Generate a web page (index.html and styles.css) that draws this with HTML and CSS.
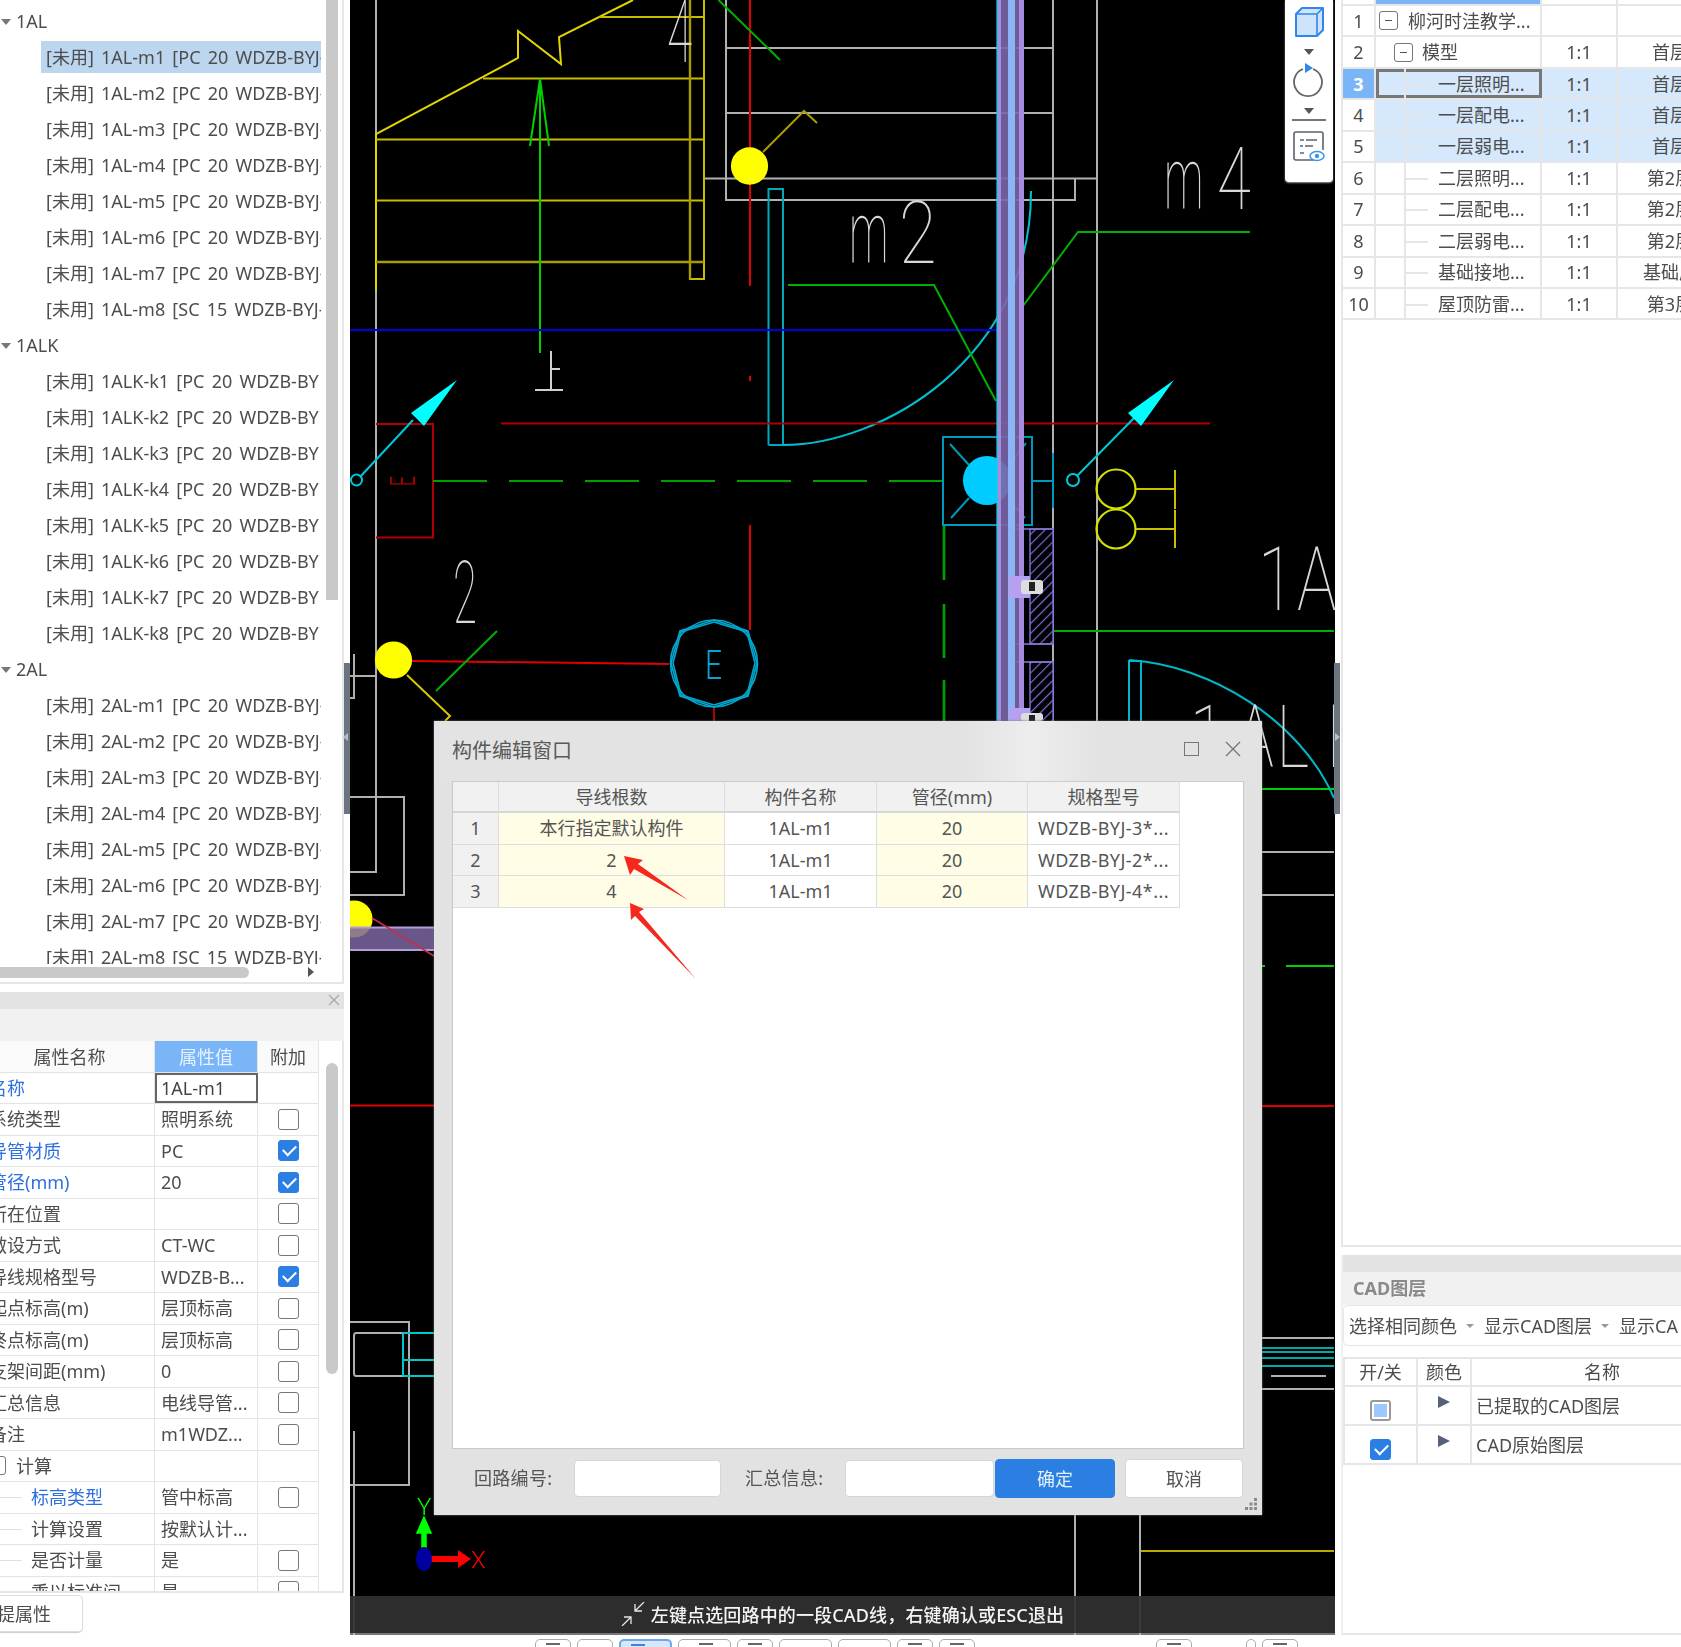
FILE: index.html
```html
<!DOCTYPE html>
<html lang="zh">
<head>
<meta charset="utf-8">
<title>构件编辑窗口</title>
<link rel="stylesheet" href="styles.css">
</head>
<body>
<div class="app">
  <aside class="left">
    <section class="tree-panel">
      <div class="tree">
        <div class="group">1AL</div>
        <div class="item selected">[未用] 1AL-m1 [PC 20 WDZB-BYJ-</div>
        <div class="item">[未用] 1AL-m2 [PC 20 WDZB-BYJ-</div>
        <div class="item">[未用] 1AL-m3 [PC 20 WDZB-BYJ-</div>
        <div class="item">[未用] 1AL-m4 [PC 20 WDZB-BYJ-</div>
        <div class="item">[未用] 1AL-m5 [PC 20 WDZB-BYJ-</div>
        <div class="item">[未用] 1AL-m6 [PC 20 WDZB-BYJ-</div>
        <div class="item">[未用] 1AL-m7 [PC 20 WDZB-BYJ-</div>
        <div class="item">[未用] 1AL-m8 [SC 15 WDZB-BYJ-</div>
        <div class="group">1ALK</div>
        <div class="item">[未用] 1ALK-k1 [PC 20 WDZB-BY</div>
        <div class="item">[未用] 1ALK-k2 [PC 20 WDZB-BY</div>
        <div class="item">[未用] 1ALK-k3 [PC 20 WDZB-BY</div>
        <div class="item">[未用] 1ALK-k4 [PC 20 WDZB-BY</div>
        <div class="item">[未用] 1ALK-k5 [PC 20 WDZB-BY</div>
        <div class="item">[未用] 1ALK-k6 [PC 20 WDZB-BY</div>
        <div class="item">[未用] 1ALK-k7 [PC 20 WDZB-BY</div>
        <div class="item">[未用] 1ALK-k8 [PC 20 WDZB-BY</div>
        <div class="group">2AL</div>
        <div class="item">[未用] 2AL-m1 [PC 20 WDZB-BYJ-</div>
        <div class="item">[未用] 2AL-m2 [PC 20 WDZB-BYJ-</div>
        <div class="item">[未用] 2AL-m3 [PC 20 WDZB-BYJ-</div>
        <div class="item">[未用] 2AL-m4 [PC 20 WDZB-BYJ-</div>
        <div class="item">[未用] 2AL-m5 [PC 20 WDZB-BYJ-</div>
        <div class="item">[未用] 2AL-m6 [PC 20 WDZB-BYJ-</div>
        <div class="item">[未用] 2AL-m7 [PC 20 WDZB-BYJ-</div>
        <div class="item">[未用] 2AL-m8 [SC 15 WDZB-BYJ-</div>
      </div>
      <div class="vbar tree-vbar"></div>
      <div class="hbar"><div class="hthumb"></div><span class="harrow"></span></div>
    </section>

    <section class="prop-panel">
      <div class="panel-head"><svg class="x-small" viewBox="0 0 12 12"><path d="M1 1L11 11M11 1L1 11"/></svg></div>
      <div class="panel-band"></div>
      <div class="prop-body">
        <div class="prop-table">
          <div class="prow phead"><div>属性名称</div><div class="hl">属性值</div><div>附加</div></div>
          <div class="prow"><div class="blue">名称</div><div class="edit">1AL-m1</div><div></div></div>
          <div class="prow"><div>系统类型</div><div>照明系统</div><div><i class="cb"></i></div></div>
          <div class="prow"><div class="blue">导管材质</div><div>PC</div><div><i class="cb on"></i></div></div>
          <div class="prow"><div class="blue">管径(mm)</div><div>20</div><div><i class="cb on"></i></div></div>
          <div class="prow"><div>所在位置</div><div></div><div><i class="cb"></i></div></div>
          <div class="prow"><div>敷设方式</div><div>CT-WC</div><div><i class="cb"></i></div></div>
          <div class="prow"><div>导线规格型号</div><div>WDZB-B...</div><div><i class="cb on"></i></div></div>
          <div class="prow"><div>起点标高(m)</div><div>层顶标高</div><div><i class="cb"></i></div></div>
          <div class="prow"><div>终点标高(m)</div><div>层顶标高</div><div><i class="cb"></i></div></div>
          <div class="prow"><div>支架间距(mm)</div><div>0</div><div><i class="cb"></i></div></div>
          <div class="prow"><div>汇总信息</div><div>电线导管...</div><div><i class="cb"></i></div></div>
          <div class="prow"><div>备注</div><div>m1WDZ...</div><div><i class="cb"></i></div></div>
          <div class="prow"><div class="sect"><i class="minus"></i>计算</div><div></div><div></div></div>
          <div class="prow"><div class="sub blue">标高类型</div><div>管中标高</div><div><i class="cb"></i></div></div>
          <div class="prow"><div class="sub">计算设置</div><div>按默认计...</div><div></div></div>
          <div class="prow"><div class="sub">是否计量</div><div>是</div><div><i class="cb"></i></div></div>
          <div class="prow"><div class="sub">乘以标准间</div><div>是</div><div><i class="cb"></i></div></div>
        </div>
        <div class="vbar prop-vbar"></div>
      </div>
      <div class="prop-foot"><div class="extract">提属性</div></div>
    </section>
  </aside>

  <main class="center">
    <div class="canvas">
      <svg class="cad" viewBox="350 0 985 1635" width="985" height="1635">
        <defs>
          <pattern id="hatch" width="7" height="7" patternUnits="userSpaceOnUse" patternTransform="rotate(45)">
            <rect width="7" height="7" fill="#000"/>
            <line x1="0" y1="0" x2="0" y2="7" stroke="#7a6ad8" stroke-width="2.4"/>
          </pattern>
        </defs>
        <g fill="none" stroke-width="2">
          <g stroke="#b0b0b0">
            <path d="M376 0V872H350"/>
            <path d="M726 0V200H1075V178M726 48H1053M726 113H1053M704 178.5H1097"/>
            <path d="M1053 0V721M1097 0V721"/>
            <path d="M354 654V698H350M350 676H376"/>
            <path d="M350 797H404V895H350"/>
            <path d="M350 1322H409V1485H350"/>
            <path d="M403 1333H356Q354 1333 354 1336V1373Q354 1376 356 1376H403"/>
            <path d="M354 1431V1635"/>
            <path d="M1075 1515V1635M1140 1515V1635"/>
            <path d="M1262 852H1334M1262 895H1334M1262 1338H1334M1271 1376H1326M1262 1389H1334"/>
          </g>
          <path stroke="#e2d500" d="M376 291V134L518 58 518 31 561 64 559 37 633 0"/>
          <path stroke="#c8bc00" d="M599 17H704M483 78.500H704M376 139.500H704M376 200.500H704M704 0V279H690V0"/>
          <path stroke="#a89c00" d="M376 262H704M690 0V279" stroke-width="2.400"/>
          <path stroke="#00d000" d="M540 79V353M530 146L540 79 549 146"/>
          <path stroke="#e00000" d="M750 0V286M750 376V381M750 525V630M412 661L669 664"/>
          <path stroke="#00b000" d="M718.500 0L780 60M436 691L497 631"/>
          <path stroke="#a89c00" d="M763 152L804 111 817 123"/>
          <path stroke="#d8c800" d="M407 675L450 716 445 721"/>
          <path stroke="#00a8b8" d="M768.500 445V189H783V445H768.500"/>
          <path stroke="#00c0d0" d="M783 445C880 445 1031 360 1031 191"/>
          <path stroke="#0000e0" d="M350 330H997"/>
          <path stroke="#b00000" d="M501 423.500H1210M376 424H433V537.500H376M714 707V721"/>
          <path stroke="#00a000" d="M433 481H943" stroke-dasharray="54 22"/>
          <path stroke="#00a000" stroke-width="2.600" d="M944 525V580M944 604V658M944 680V721"/>
          <path stroke="#00b000" d="M788 285H934L996 401M1250 232H1078L1020 310M1042 631H1334"/>
          <path stroke="#00d000" d="M1262 789H1334M1262 966H1265M1286 966H1334"/>
          <path stroke="#e00000" d="M350 1105.500H434M1262 1106H1334"/>
          <path stroke="#00c8c8" d="M403 1333V1376M403 1333H434M403 1360H434M403 1376H434"/>
          <path stroke="#00a8a8" d="M1262 1348H1334M1262 1352H1334M1262 1358H1334M1262 1366H1334"/>
          <path stroke="#b8ac00" d="M1141 1551H1334"/>
          <path stroke="#00b8c8" d="M1129 721V661H1141V721M1129 660C1210 665 1300 720 1334 798"/>
          <circle cx="356.500" cy="480" r="5.500" stroke="#00c8d8"/>
          <path stroke="#00c8d8" d="M360 477L413 420"/>
          <circle cx="1073" cy="480" r="6" stroke="#00c8d8"/>
          <path stroke="#00c8d8" d="M1077 476L1137 415"/>
          <path stroke="#d0d0d0" d="M551 351V390M535 390H563M551 369H560"/>
        </g>
        <polygon fill="#00ffff" points="457,380 411,413 424,426"/>
        <polygon fill="#00ffff" points="1174,380 1128,413 1141,426"/>
        <ellipse cx="749.500" cy="166" rx="18.600" ry="18.800" fill="#ffff00"/>
        <ellipse cx="393.500" cy="660" rx="18.600" ry="18.600" fill="#ffff00"/>
        <ellipse cx="354" cy="919" rx="18.600" ry="18.600" fill="#ffff00"/>
        <rect x="350" y="927" width="84" height="23" fill="#7a66a0" fill-opacity=".85"/>
        <path d="M350 927.500H434M350 950H434" stroke="#b39ddb" stroke-width="2"/>
        <path d="M372 918L434 956" stroke="#c03050" stroke-width="1.600"/>
        <g fill="none" stroke="#00a8d0" stroke-width="1.600">
          <circle cx="714" cy="663.500" r="43.500"/>
          <polygon points="714,620 748,631 757,663 748,696 714,707 680,696 671,663 680,631"/>
          <polygon points="714,622 747,632 755,663 747,695 714,705 681,695 673,663 681,632"/>
        </g>
        <rect x="943" y="437" width="89" height="88" fill="none" stroke="#0099bb" stroke-width="2"/>
        <path d="M950 444L969 465M951 518L969 498M1026 443L1009 465M1025 518L1009 500M1032 481H1053M1053 453V508" fill="none" stroke="#0099bb" stroke-width="2"/>
        <ellipse cx="987" cy="480.500" rx="24" ry="24.500" fill="#00ccff"/>
        <rect x="1030" y="529" width="23" height="115" fill="url(#hatch)" stroke="#7a6ad8" stroke-width="1.500"/>
        <rect x="1030" y="662" width="23" height="60" fill="url(#hatch)" stroke="#7a6ad8" stroke-width="1.500"/>
        <path d="M1012 529H1053M1012 644H1053M1012 662H1053" stroke="#8a78d0" stroke-width="1.500"/>
        <rect x="997" y="0" width="27" height="721" fill="#7a66a8" fill-opacity=".9"/>
        <rect x="997" y="0" width="4" height="721" fill="#a48de0"/>
        <rect x="1019" y="0" width="5" height="721" fill="#a48de0"/>
        <rect x="1008" y="0" width="7" height="721" fill="#8db4f5"/>
        <path d="M997 0V721" stroke="#00d8e0" stroke-width="1.200"/>
        <rect x="1009" y="576" width="21" height="22" fill="#b8a0f0"/>
        <rect x="1021" y="580" width="22" height="14" rx="3" fill="#ddd"/>
        <rect x="1029" y="582" width="6" height="9" fill="#222"/>
        <rect x="1009" y="708" width="21" height="13" fill="#b8a0f0"/>
        <rect x="1021" y="713" width="22" height="8" rx="3" fill="#ddd"/>
        <rect x="1029" y="715" width="6" height="6" fill="#222"/>
        <g fill="none" stroke="#d4e000" stroke-width="2.200">
          <circle cx="1116" cy="489" r="19.500"/>
          <circle cx="1116" cy="529" r="19.500"/>
        </g>
        <path d="M1136 489H1175M1136 529H1175M1175 470V509M1175 510V548" stroke="#c8c000" stroke-width="2" fill="none"/>
        <g class="cad-text">
          <text x="667" y="62" textLength="25" lengthAdjust="spacingAndGlyphs">4</text>
          <text transform="translate(849 263) scale(.5 1)">m</text>
          <text transform="translate(899 263) scale(.78 1)">2</text>
          <text transform="translate(1164 209) scale(.5 1)">m</text>
          <text transform="translate(1217 209) scale(.7 1)">4</text>
          <text x="453" y="623" textLength="24" lengthAdjust="spacingAndGlyphs">2</text>
          <text transform="translate(1258 610) scale(.75 1)" x="0 52">1A</text>
          <text transform="translate(1190 767) scale(.72 1)" x="0 64 120 190">1ALH</text>
        </g>
        <text class="cad-e" x="705" y="679" textLength="17" lengthAdjust="spacingAndGlyphs">E</text>
        <text class="cad-re" transform="translate(415 486) rotate(-90) scale(.5 1)">E</text>
        <path d="M424 1517L417 1533H422V1552H426V1533H431Z" fill="#00ff00" stroke="#00ff00" stroke-width="1.500"/>
        <path d="M430 1556H458V1550L471 1559 458 1568V1562H430Z" fill="#ff0000"/>
        <ellipse cx="424" cy="1559" rx="8" ry="12" fill="#0000a0"/>
        <text class="axis-y" x="417" y="1515">Y</text>
        <text class="axis-x" x="471" y="1568">X</text>
      </svg>

      <div class="sidetool">
        <svg class="st-cube" viewBox="0 0 32 32"><path d="M3 8L9 2H30V24L24 30H3Z" fill="#cfe3fb" stroke="#2e86ee" stroke-width="2" stroke-linejoin="round"/><path d="M3 8H24V30M24 8L30 2" fill="none" stroke="#2e86ee" stroke-width="1.600"/></svg>
        <span class="caret"></span>
        <svg class="st-rot" viewBox="0 0 32 34"><path d="M11 6A14 14 0 1 0 21 6" fill="none" stroke="#666" stroke-width="1.800"/><path d="M13 0L21 5 13 10Z" fill="#2e86ee"/></svg>
        <span class="caret"></span>
        <div class="st-line"></div>
        <svg class="st-list" viewBox="0 0 32 31"><path d="M23 29H3Q1 29 1 27V3Q1 1 3 1H28Q30 1 30 3V19" fill="none" stroke="#5a6370" stroke-width="1.600"/><path d="M7 9H11M13 9H24M7 15H10M12 15H20M7 22H11" stroke="#5a6370" stroke-width="1.600"/><ellipse cx="24" cy="25" rx="7" ry="4.500" fill="#fff" stroke="#3a96e8" stroke-width="1.500"/><circle cx="24" cy="25" r="2.200" fill="#3a96e8"/></svg>
      </div>

      <div class="status">
        <svg class="st-ic" viewBox="0 0 24 24"><path d="M23 0L14 9M14 2V9H21M1 24L10 15M3 15H10V22" fill="none" stroke="#e8e8e8" stroke-width="1.300"/></svg>
        <span>左键点选回路中的一段CAD线，右键确认或ESC退出</span>
      </div>

      <div class="dialog">
        <div class="dlg-title">
          <span class="dlg-name">构件编辑窗口</span>
          <span class="dlg-max"></span>
          <svg class="dlg-close" viewBox="0 0 16 16"><path d="M1 1L15 15M15 1L1 15"/></svg>
        </div>
        <div class="dlg-area">
          <div class="grid">
            <div class="grow ghead"><div class="rh"></div><div>导线根数</div><div>构件名称</div><div>管径(mm)</div><div>规格型号</div></div>
            <div class="grow"><div class="rh">1</div><div class="yel">本行指定默认构件</div><div>1AL-m1</div><div class="yel">20</div><div class="spec">WDZB-BYJ-3*...</div></div>
            <div class="grow"><div class="rh">2</div><div class="yel">2</div><div>1AL-m1</div><div class="yel">20</div><div class="spec">WDZB-BYJ-2*...</div></div>
            <div class="grow"><div class="rh">3</div><div class="yel">4</div><div>1AL-m1</div><div class="yel">20</div><div class="spec">WDZB-BYJ-4*...</div></div>
          </div>
          <svg class="annot a1" viewBox="0 0 64 44"><polygon points="0,0 19,4 14,8 64,44 10,13 6,19" fill="#f5281e"/></svg>
          <svg class="annot a2" viewBox="0 0 66 76"><polygon points="0,0 14,6 9,9 66,76 5,13 1,17" fill="#f5281e"/></svg>
        </div>
        <div class="dlg-foot">
          <label class="lbl">回路编号:</label><span class="inp i1"></span>
          <label class="lbl l2">汇总信息:</label><span class="inp i2"></span>
          <button class="btn ok">确定</button>
          <button class="btn cancel">取消</button>
        </div>
        <svg class="grip" viewBox="0 0 12 12"><path d="M9 0h3v3H9zM9 4.500h3v3H9zM4.500 4.500h3v3h-3zM9 9h3v3H9zM4.500 9h3v3h-3zM0 9h3v3H0z" fill="#8a8a8a"/></svg>
      </div>
    </div>
    <div class="bottombar">
      <span class="tb w37"><b class="mk"></b></span>
      <span class="tb w37"></span>
      <span class="tb w53 active"><b class="mk blue-mk"></b></span>
      <span class="tb w53"><b class="mk tri"></b></span>
      <span class="tb w37"><b class="mk"></b></span>
      <span class="tb w53"></span>
      <span class="tb w53"></span>
      <span class="tb w37"><b class="mk"></b></span>
      <span class="tb w37"><b class="mk"></b></span>
      <span class="tb w37 far"><b class="mk"></b></span>
      <span class="tb w11"></span>
      <span class="tb w37"><b class="mk"></b></span>
    </div>
  </main>

  <aside class="right">
    <section class="model-panel">
      <div class="mrow mtop"><div></div><div class="bluebar"></div><div></div><div></div></div>
      <div class="mrow"><div class="no">1</div><div class="name"><i class="minus m1"></i>柳河时洼教学...</div><div></div><div></div></div>
      <div class="mrow"><div class="no">2</div><div class="name"><i class="minus m2"></i><span class="t2">模型</span></div><div>1:1</div><div>首层</div></div>
      <div class="mrow sel cur"><div class="no">3</div><div class="name tick">一层照明...</div><div>1:1</div><div>首层</div></div>
      <div class="mrow sel"><div class="no">4</div><div class="name tick">一层配电...</div><div>1:1</div><div>首层</div></div>
      <div class="mrow sel"><div class="no">5</div><div class="name tick">一层弱电...</div><div>1:1</div><div>首层</div></div>
      <div class="mrow"><div class="no">6</div><div class="name tick">二层照明...</div><div>1:1</div><div>第2层</div></div>
      <div class="mrow"><div class="no">7</div><div class="name tick">二层配电...</div><div>1:1</div><div>第2层</div></div>
      <div class="mrow"><div class="no">8</div><div class="name tick">二层弱电...</div><div>1:1</div><div>第2层</div></div>
      <div class="mrow"><div class="no">9</div><div class="name tick">基础接地...</div><div>1:1</div><div>基础层</div></div>
      <div class="mrow"><div class="no">10</div><div class="name tick">屋顶防雷...</div><div>1:1</div><div>第3层</div></div>
    </section>
    <section class="cad-panel">
      <div class="panel-head"></div>
      <div class="cad-title">CAD图层</div>
      <div class="cad-tools"><span>选择相同颜色</span><i class="dd"></i><span>显示CAD图层</span><i class="dd"></i><span>显示CA</span></div>
      <div class="lrow lhead"><div>开/关</div><div>颜色</div><div class="lname-h">名称</div></div>
      <div class="lrow"><div><i class="cb partial"></i></div><div><i class="play"></i></div><div class="lname">已提取的CAD图层</div></div>
      <div class="lrow"><div><i class="cb on"></i></div><div><i class="play"></i></div><div class="lname">CAD原始图层</div></div>
    </section>
  </aside>

  <div class="handle hl-left"></div>
  <div class="handle hl-right"></div>
</div>
</body>
</html>
```

FILE: styles.css
```css
* { box-sizing: border-box; }
html, body { margin: 0; padding: 0; background: #fff; }
body {
  width: 1681px; height: 1647px; overflow: hidden;
  font-family: "Noto Sans", "Noto Sans CJK SC", sans-serif;
  font-size: 18px; color: #4d4d4d; line-height: 1;
}
.app {
  position: relative; display: grid;
  grid-template-columns: 350px 985px 346px;
  width: 1681px; height: 1647px; overflow: hidden;
  filter: blur(.45px);
}

/* left column */
.left { display: flex; flex-direction: column; gap: 8px; padding-right: 6px; }
.tree-panel {
  position: relative; height: 984px; flex: none;
  border-right: 2px solid #e6e6e6; border-bottom: 2px solid #e6e6e6;
  display: flex; flex-direction: column;
}
.tree { height: 964px; width: 321px; overflow: hidden; padding-top: 4px; flex: none; }
.group, .item { height: 36px; line-height: 35px; white-space: nowrap; overflow: hidden; }
.group { padding-left: 16px; position: relative; }
.group::before {
  content: ""; position: absolute; left: 1px; top: 15px;
  border: 5px solid transparent; border-top: 6px solid #777; border-bottom: 0;
}
.item { padding-left: 46px; word-spacing: 2.5px; }
.item.selected {
  position: relative; background: linear-gradient(#bcd6f0, #bcd6f0) 41px 1px / 280px 32px no-repeat;
}
.vbar { position: absolute; width: 12px; background: #c9c9c9; }
.tree-vbar { left: 326px; top: 0; height: 600px; }
.hbar { flex: 1; position: relative; }
.hthumb { position: absolute; left: 0; top: 3px; width: 249px; height: 11px; background: #c9c9c9; border-radius: 0 6px 6px 0; }
.harrow {
  position: absolute; left: 308px; top: 3px;
  border: 5px solid transparent; border-left: 6px solid #555; border-right: 0;
}

.prop-panel { flex: 1; display: flex; flex-direction: column; }
.panel-head { height: 17px; background: #e3e3e3; position: relative; flex: none; }
.x-small { position: absolute; right: 4px; top: 2px; width: 12px; height: 12px; fill: none; stroke: #aaa; stroke-width: 1.4; }
.panel-band { height: 32px; background: #f1f1f1; flex: none; }
.prop-body { position: relative; height: 552px; overflow: hidden; border-right: 2px solid #e6e6e6; border-bottom: 2px solid #e6e6e6; flex: none; }
.prop-table { margin-left: -15px; width: 334px; }
.prow {
  display: grid; grid-template-columns: 170px 103px 61px;
  height: 31.5px; border-bottom: 1px solid #e4e4e4;
}
.prow > div { display: flex; align-items: center; border-right: 1px solid #e4e4e4; white-space: nowrap; overflow: hidden; }
.prow > div:nth-child(1) { padding-left: 4px; }
.prow > div:nth-child(2) { padding-left: 6px; }
.prow > div:nth-child(3) { justify-content: center; }
.phead > div { justify-content: center; padding: 1px 0 0 !important; background: #fafafa; }
.phead > div.hl { background: #7ab6f7; color: #e8f2ff; }
.blue { color: #2f6fe0; }
.edit { border: 2px solid #666 !important; color: #444; padding-left: 4px !important; }
.minus { display: inline-block; width: 19px; height: 19px; border: 1px solid #777; border-radius: 3px; background: #fff; margin-right: 10px; position: relative; flex: none; }
.sect .minus { margin-left: -2px; }
.minus::after { content: ""; position: absolute; left: 5px; right: 5px; top: 8px; height: 1px; background: #555; }
.sub { padding-left: 46px !important; position: relative; }
.sub::before { content: ""; position: absolute; left: 15px; width: 22px; top: 50%; height: 1px; background: #e0e0e0; }
.cb {
  display: inline-block; width: 21px; height: 21px; border: 1px solid #777;
  border-radius: 3px; background: #fff; position: relative; flex: none;
}
.cb.on { background: #2b7fe3; border-color: #2b7fe3; }
.cb.on::after {
  content: ""; position: absolute; left: 4px; top: 4px; width: 11px; height: 6px;
  border-left: 2px solid #fff; border-bottom: 2px solid #fff; transform: rotate(-45deg);
}
.cb.partial { border: 2px solid #999; background: #fff; }
.cb.partial::after { content: ""; position: absolute; inset: 2px; background: #9cc8ff; }
.prop-vbar { left: 326px; top: 22px; height: 311px; border-radius: 6px; }
.prop-foot { flex: 1; }
.extract {
  width: 83px; height: 37px; margin-top: 2px; border: 1px solid #ddd; border-left: 0;
  border-radius: 0 5px 5px 0; display: flex; align-items: center; justify-content: flex-end; padding-right: 31px; white-space: nowrap;
  box-shadow: 0 1px 1px #ccc;
}

/* centre */
.center { display: flex; flex-direction: column; min-width: 0; }
.canvas { position: relative; height: 1635px; flex: none; background: #000; border-bottom: 2px solid #777; }
.cad { display: block; position: absolute; left: 0; top: 0; }
.cad-text text { font-family: "Roboto", sans-serif; font-weight: 100; font-size: 88px; fill: #d8d8d8; }
.cad-e { font-family: "Roboto", sans-serif; font-weight: 300; font-size: 41px; fill: #00a8d0; }
.cad-re { font-family: "Roboto", sans-serif; font-weight: 300; font-size: 35px; fill: #b00000; }
.axis-y { font-family: "Roboto", sans-serif; font-weight: 300; font-size: 24px; fill: #00ff00; }
.axis-x { font-family: "Roboto", sans-serif; font-weight: 300; font-size: 24px; fill: #ff0000; }

.sidetool {
  position: absolute; left: 935px; top: 0; width: 48px; height: 182px;
  background: #fff; border-radius: 0 0 4px 4px; box-shadow: 0 1px 2px #999;
  display: flex; flex-direction: column; align-items: center;
}
.st-cube { width: 32px; height: 32px; margin-top: 6px; flex: none; }
.caret { width: 0; height: 0; border: 5px solid transparent; border-top: 6px solid #555; border-bottom: 0; margin-top: 11px; flex: none; }
.st-rot { width: 32px; height: 34px; margin-top: 8px; flex: none; margin-left: -3px; }
.st-line { width: 34px; height: 2px; background: #777; margin-top: 5px; flex: none; }
.st-list { width: 32px; height: 31px; margin-top: 10px; flex: none; }

.status {
  position: absolute; left: 0; right: 0; top: 1596px; height: 37px;
  background: rgba(48, 48, 48, .93); color: #f4f4f4; font-weight: 500;
  display: flex; align-items: center; justify-content: center; gap: 6px; letter-spacing: .15px;
}
.st-ic { width: 24px; height: 24px; flex: none; margin-top: -2px; }

.dialog {
  position: absolute; left: 84px; top: 721px; width: 828px; height: 794px;
  background: #e2e2e2; box-shadow: 0 0 2px #777;
  display: flex; flex-direction: column;
}
.dlg-title {
  height: 60px; flex: none; position: relative; display: flex; align-items: center; padding: 0 0 0 18px;
  background: linear-gradient(90deg, #e3e3e3 0 64%, #eeeded 72%, #e3e3e3 80%);
}
.dlg-name { font-size: 20px; color: #5a5a5a; margin-top: 0; }
.dlg-max { position: absolute; left: 750px; top: 21px; width: 15px; height: 14px; border: 1.5px solid #777; }
.dlg-close { position: absolute; left: 791px; top: 20px; width: 16px; height: 16px; fill: none; stroke: #777; stroke-width: 1.4; }
.dlg-area { position: relative; margin: 0 18px; height: 668px; flex: none; background: #fff; border: 1px solid #c9c9c9; border-top-color: #ccc; }
.grid { width: 727px; }
.grow { display: grid; grid-template-columns: 46px 226px 152px 151px 152px; height: 31.5px; }
.grow > div { display: flex; align-items: center; justify-content: center; white-space: nowrap; border-right: 1px solid #ddd; border-bottom: 1px solid #ddd; color: #555; }
.grow > div.spec { letter-spacing: .45px; }
.ghead { height: 31px; }
.ghead > div { background: #f1f1f1; border-bottom: 2px solid #d6d6d6; }
.rh { background: #f1f1f1; }
.yel { background: #fffde6; }
.annot { position: absolute; }
.a1 { left: 171px; top: 74px; width: 64px; height: 44px; }
.a2 { left: 177px; top: 121px; width: 66px; height: 76px; }
.dlg-foot { flex: 1; display: flex; align-items: flex-start; padding: 11px 0 0 40px; }
.lbl { width: 80px; margin-top: 9px; color: #555; white-space: nowrap; flex: none; letter-spacing: .3px; }
.l2 { margin-left: 24px; }
.inp { height: 37px; background: #fff; border: 1px solid #d6d6d6; border-radius: 4px; flex: none; margin-left: 20px; }
.i1 { width: 147px; }
.i2 { width: 149px; }
.btn { font: inherit; height: 39px; margin-top: -1px; border-radius: 4px; flex: none; border: 1px solid #d6d6d6; }
.ok { width: 120px; margin-left: 1px; background: #2b7fe3; border-color: #2b7fe3; color: #e6f0fb; }
.cancel { width: 118px; margin-left: 10px; background: #fff; color: #555; }
.grip { position: absolute; right: 5px; bottom: 5px; width: 12px; height: 12px; }

.bottombar { flex: 1; display: flex; gap: 6px; padding: 4px 0 0 185px; overflow: hidden; }
.tb { display: block; height: 30px; border: 1px solid #aaa; border-radius: 5px; flex: none; position: relative; }
.w37 { width: 36px; }
.w53 { width: 53px; }
.w11 { width: 10px; }
.active { border: 2px solid #6aa8ee; background: #d8e8fa; }
.far { margin-left: 175px; }
.w11 { margin-left: 48px; }
.mk { position: absolute; left: 10px; top: 3px; width: 14px; height: 5px; border-top: 2px solid #666; }
.blue-mk { border-top-color: #3a86e0; }
.tri { left: 20px; }

/* right */
.right { display: flex; flex-direction: column; padding-left: 6px; gap: 8px; min-width: 0; overflow: hidden; }
.model-panel { height: 1247px; margin-left: 0; border-left: 2px solid #e6e6e6; border-bottom: 2px solid #e6e6e6; flex: none; }
.mrow { display: grid; grid-template-columns: 33px 166px 76px 106px; height: 31.45px; width: 381px; border-bottom: 2px solid #e6e6e6; }
.mrow > div { display: flex; align-items: center; justify-content: center; white-space: nowrap; border-right: 2px solid #e6e6e6; color: #4d4d4d; position: relative; }
.mtop { height: 6px; }
.mrow .bluebar { background: #7ab6f7; }
.mrow .no { font-size: 18px; }
.mrow .name { justify-content: flex-start; }
.minus.m1 { margin-left: 3px; margin-right: 10px; }
.minus.m2 { margin-left: 18px; margin-right: 9px; }
.t2 { white-space: nowrap; }
.tick { padding-left: 62px !important; }
.tick::before { content: ""; position: absolute; left: 28px; top: -2px; bottom: -2px; width: 2px; background: #e6e6e6; }
.tick::after { content: ""; position: absolute; left: 28px; top: 50%; width: 24px; height: 2px; background: #e6e6e6; }
.sel > div { background: #d6e9fc; }
.sel .no { background: #fff; }
.cur .no { background: #7ab6f7; color: #fff; font-weight: 700; }
.cur .name { outline: 3px solid #777; outline-offset: -3px; }

.cad-panel { height: 380px; border-bottom: 2px solid #e6e6e6; border-left: 2px solid #f0f0f0; flex: none; }
.cad-title { height: 33px; background: #f1f1f1; padding: 0 0 2px 10px; display: flex; align-items: center; font-weight: 700; color: #8a8a8a; flex: none; }
.cad-tools { height: 41px; display: flex; align-items: center; padding-left: 5px; white-space: nowrap; border: 1px solid #e6e6e6; border-right: 0; border-radius: 5px 0 0 5px; margin-bottom: 11px; }
.dd { width: 0; height: 0; border: 4px solid transparent; border-top: 4px solid #999; border-bottom: 0; margin: 0 10px 0 9px; flex: none; }
.lrow { display: grid; grid-template-columns: 73px 54px 262px; height: 39px; width: 389px; border-bottom: 2px solid #e6e6e6; }
.lrow > div { display: flex; align-items: center; justify-content: center; border-right: 2px solid #e6e6e6; white-space: nowrap; }
.lhead { height: 30px; border-top: 2px solid #e6e6e6; border-left: 2px solid #e6e6e6; }
.lhead + .lrow, .lhead + .lrow + .lrow { border-left: 2px solid #e6e6e6; }
.lrow > div.lname { justify-content: flex-start; padding-left: 4px; }
.lrow .cb { margin-top: 9px; }
.play { width: 0; height: 0; border: 6px solid transparent; border-left: 12px solid #55607a; border-right: 0; margin-top: -8px; margin-left: 0; }

/* splitters */
.handle { position: absolute; top: 663px; width: 6px; height: 151px; background: #6a7580; }
.handle::after { content: ""; position: absolute; top: 70px; border: 4px solid transparent; }
.hl-left { left: 344px; }
.hl-left::after { left: -1px; border-right: 5px solid #b8bec4; border-left: 0; }
.hl-right { left: 1334px; }
.hl-right::after { left: 1px; border-left: 5px solid #b8bec4; border-right: 0; }
```
